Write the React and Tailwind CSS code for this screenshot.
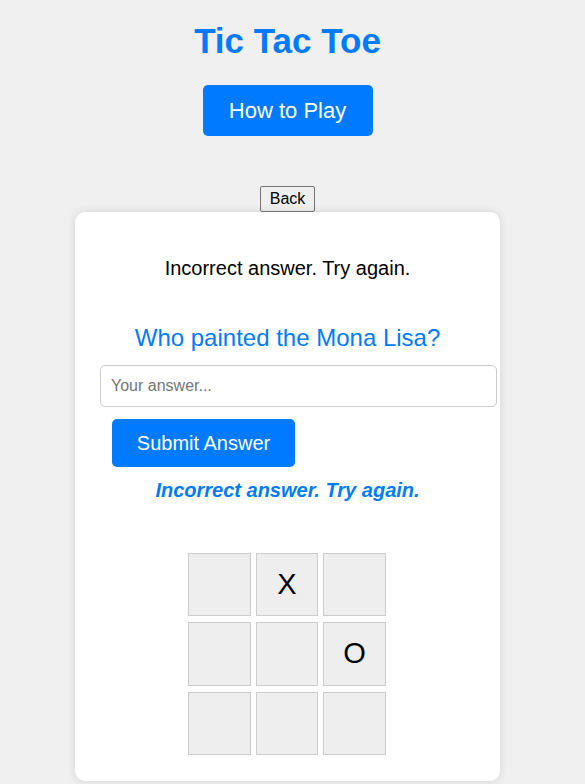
export default function App() {
  const cells = ["", "X", "", "", "", "O", "", "", ""];
  return (
    <div className="w-full min-h-[784px] bg-[#f0f0f0] font-['Liberation_Sans',Arial,sans-serif]">
      <div className="w-[575px] flex flex-col items-center">
        <h1 className="mt-[22px] text-[35px] leading-[38px] font-bold text-[#007bff]">Tic Tac Toe</h1>
        <button className="mt-[25px] w-[170px] h-[51px] rounded-[5px] bg-[#007bff] text-white text-[22px] leading-[25px]">
          How to Play
        </button>
        <button className="mt-[50px] h-[26px] px-[9px] border border-[#767676] bg-[#efefef] rounded-[2px] text-[16px] leading-[18px] text-black">
          Back
        </button>
        <div className="w-[425px] bg-white rounded-[10px] shadow-[0_0_10px_rgba(0,0,0,0.12)] px-[25px] pt-[45px] pb-[26px] flex flex-col">
          <p className="text-center text-[20px] leading-[23px] text-black">Incorrect answer. Try again.</p>
          <h2 className="mt-[44px] text-center text-[24px] leading-[27px] text-[#007bff]">Who painted the Mona Lisa?</h2>
          <input
            className="mt-[14px] box-content w-full h-[20px] py-[10px] px-[10px] border border-[#cccccc] rounded-[5px] text-[16px] outline-none placeholder:text-[#757575]"
            placeholder="Your answer..."
          />
          <div>
            <button className="mt-[12px] ml-[12px] w-[183px] h-[48px] rounded-[5px] bg-[#007bff] text-white text-[20px] leading-[23px]">
              Submit Answer
            </button>
          </div>
          <p className="mt-[12px] text-center text-[20px] leading-[23px] italic font-bold text-[#007bff]">
            Incorrect answer. Try again.
          </p>
          <div className="mt-[51px] self-start ml-[88px] grid grid-cols-[63px_62px_63px] grid-rows-[63px_64px_63px] gap-x-[5px] gap-y-[6px]">
            {cells.map((c, i) => (
              <div
                key={i}
                className="border border-[#cccccc] bg-[#eeeeee] flex items-center justify-center text-[29px] text-black"
              >
                {c}
              </div>
            ))}
          </div>
        </div>
      </div>
    </div>
  );
}
